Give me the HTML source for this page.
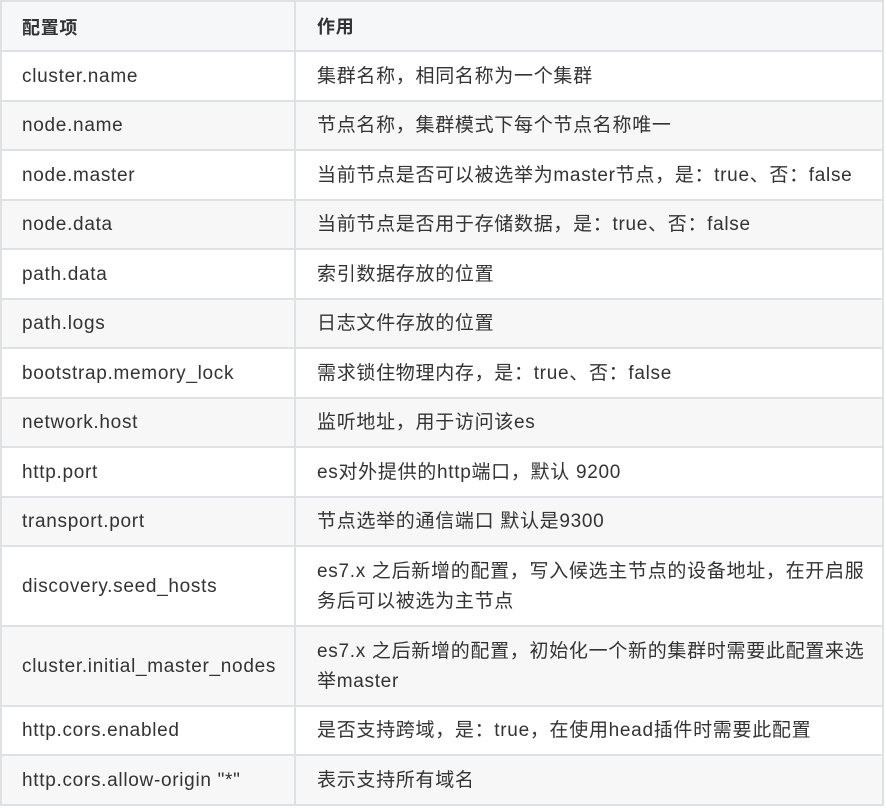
<!DOCTYPE html>
<html><head><meta charset="utf-8"><style>
body{margin:0;background:#fff;width:886px;height:808px;overflow:hidden;font-family:"Liberation Sans","Noto Sans CJK SC",sans-serif;font-size:19px;letter-spacing:0.7px;color:#333}
.r{position:absolute;left:0;width:884px;border:2px solid #dfe2e5;border-bottom:none;box-sizing:border-box}
.c1,.c2{position:absolute;top:0;bottom:0;display:flex;align-items:center;box-sizing:border-box;white-space:nowrap}
.c1{left:0;width:294px;padding-left:20px;border-right:2px solid #dfe2e5}
.c2{left:296px;right:0;padding-left:19px;padding-right:2px;line-height:30px}
.g{background:#f7f7f7}
.h{background:#f6f7f8;font-weight:bold;font-size:18px}
.last{position:absolute;left:0;top:804px;width:884px;height:2px;background:#dfe2e5}
</style></head><body>
<div class="r h" style="top:0;height:51px"><div class="c1">配置项</div><div class="c2">作用</div></div>
<div class="r" style="top:50px;height:51px"><div class="c1">cluster.name</div><div class="c2">集群名称，相同名称为一个集群</div></div>
<div class="r g" style="top:100px;height:50px"><div class="c1">node.name</div><div class="c2">节点名称，集群模式下每个节点名称唯一</div></div>
<div class="r" style="top:149px;height:51px"><div class="c1">node.master</div><div class="c2">当前节点是否可以被选举为master节点，是：true、否：false</div></div>
<div class="r g" style="top:199px;height:50px"><div class="c1">node.data</div><div class="c2">当前节点是否用于存储数据，是：true、否：false</div></div>
<div class="r" style="top:248px;height:51px"><div class="c1">path.data</div><div class="c2">索引数据存放的位置</div></div>
<div class="r g" style="top:298px;height:50px"><div class="c1">path.logs</div><div class="c2">日志文件存放的位置</div></div>
<div class="r" style="top:347px;height:51px"><div class="c1">bootstrap.memory_lock</div><div class="c2">需求锁住物理内存，是：true、否：false</div></div>
<div class="r g" style="top:397px;height:50px"><div class="c1">network.host</div><div class="c2">监听地址，用于访问该es</div></div>
<div class="r" style="top:446px;height:51px"><div class="c1">http.port</div><div class="c2">es对外提供的http端口，默认 9200</div></div>
<div class="r g" style="top:496px;height:50px"><div class="c1">transport.port</div><div class="c2">节点选举的通信端口 默认是9300</div></div>
<div class="r" style="top:545px;height:81px"><div class="c1">discovery.seed_hosts</div><div class="c2"><div>es7.x 之后新增的配置，写入候选主节点的设备地址，在开启服<br>务后可以被选为主节点</div></div></div>
<div class="r g" style="top:625px;height:81px"><div class="c1">cluster.initial_master_nodes</div><div class="c2"><div>es7.x 之后新增的配置，初始化一个新的集群时需要此配置来选<br>举master</div></div></div>
<div class="r" style="top:705px;height:50px"><div class="c1">http.cors.enabled</div><div class="c2">是否支持跨域，是：true，在使用head插件时需要此配置</div></div>
<div class="r g" style="top:754px;height:51px"><div class="c1">http.cors.allow-origin "*"</div><div class="c2">表示支持所有域名</div></div>
<div class="last"></div>
</body></html>
